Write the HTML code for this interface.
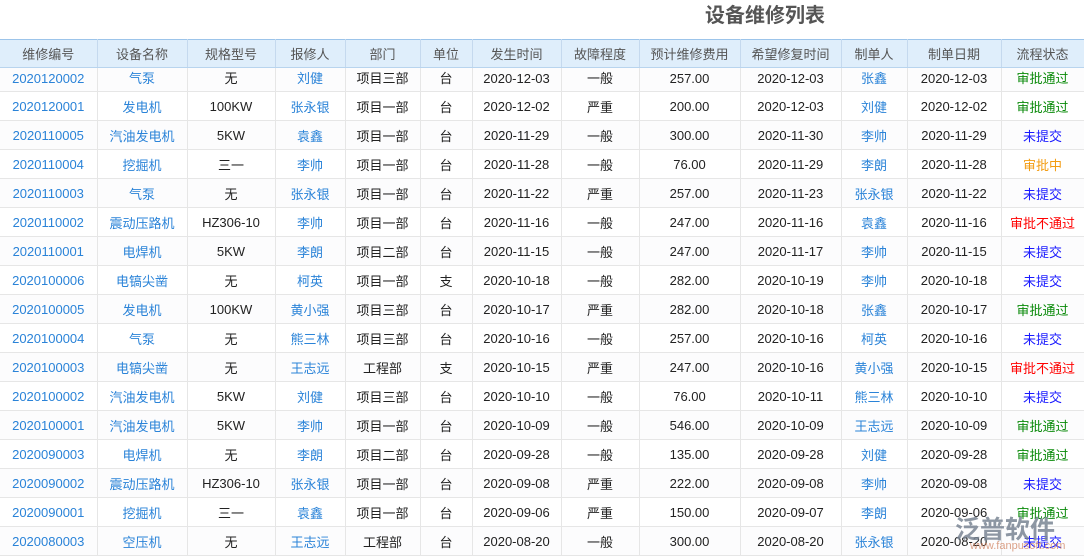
<!DOCTYPE html><html><head><meta charset="utf-8"><style>
body{margin:0;width:1084px;height:557px;overflow:hidden;background:#fff;font-family:"Liberation Sans","Noto Sans CJK SC",sans-serif;font-size:13px;color:#222}
h1{position:absolute;left:0;width:1530px;top:3px;margin:0;text-align:center;font-size:20px;font-weight:bold;color:#555;line-height:26px}
table{position:absolute;top:39px;left:0;border-collapse:collapse;table-layout:fixed;width:1084px}
th{background:#dfeefb;color:#555;font-weight:normal;height:27px;border-top:1px solid #9cc4ea;border-bottom:1px solid #b8d4ee;border-right:1px solid #c5d9ee;padding:0}
td{height:28px;border-bottom:1px solid #e6e6e6;border-right:1px solid #e6e6e6;text-align:center;padding:0;white-space:nowrap}
tr.f td{height:21px;padding-bottom:2px;line-height:18px}
tr:nth-child(even) td{background:#fcfcfd}
.b{color:#2a83d8}.g{color:#0a8a0a}.o{color:#f39c12}.r{color:#f00}.u{color:#1a1aff}
.wm{position:absolute;left:955px;top:510px;color:#7a8594;font-size:25px;opacity:.85;font-weight:bold}
.wm2{position:absolute;left:970px;top:540px;color:#d38a6a;font-size:11px;opacity:.8}
</style></head><body>
<h1>设备维修列表</h1>
<table>
<colgroup><col style="width:97px"><col style="width:90px"><col style="width:88px"><col style="width:70px"><col style="width:75px"><col style="width:52px"><col style="width:89px"><col style="width:78px"><col style="width:101px"><col style="width:101px"><col style="width:66px"><col style="width:94px"><col style="width:83px"></colgroup>
<tr><th>维修编号</th><th>设备名称</th><th>规格型号</th><th>报修人</th><th>部门</th><th>单位</th><th>发生时间</th><th>故障程度</th><th>预计维修费用</th><th>希望修复时间</th><th>制单人</th><th>制单日期</th><th>流程状态</th></tr>
<tr class="f"><td class="b">2020120002</td><td class="b">气泵</td><td>无</td><td class="b">刘健</td><td>项目三部</td><td>台</td><td>2020-12-03</td><td>一般</td><td>257.00</td><td>2020-12-03</td><td class="b">张鑫</td><td>2020-12-03</td><td class="g">审批通过</td></tr>
<tr><td class="b">2020120001</td><td class="b">发电机</td><td>100KW</td><td class="b">张永银</td><td>项目一部</td><td>台</td><td>2020-12-02</td><td>严重</td><td>200.00</td><td>2020-12-03</td><td class="b">刘健</td><td>2020-12-02</td><td class="g">审批通过</td></tr>
<tr><td class="b">2020110005</td><td class="b">汽油发电机</td><td>5KW</td><td class="b">袁鑫</td><td>项目一部</td><td>台</td><td>2020-11-29</td><td>一般</td><td>300.00</td><td>2020-11-30</td><td class="b">李帅</td><td>2020-11-29</td><td class="u">未提交</td></tr>
<tr><td class="b">2020110004</td><td class="b">挖掘机</td><td>三一</td><td class="b">李帅</td><td>项目一部</td><td>台</td><td>2020-11-28</td><td>一般</td><td>76.00</td><td>2020-11-29</td><td class="b">李朗</td><td>2020-11-28</td><td class="o">审批中</td></tr>
<tr><td class="b">2020110003</td><td class="b">气泵</td><td>无</td><td class="b">张永银</td><td>项目一部</td><td>台</td><td>2020-11-22</td><td>严重</td><td>257.00</td><td>2020-11-23</td><td class="b">张永银</td><td>2020-11-22</td><td class="u">未提交</td></tr>
<tr><td class="b">2020110002</td><td class="b">震动压路机</td><td>HZ306-10</td><td class="b">李帅</td><td>项目一部</td><td>台</td><td>2020-11-16</td><td>一般</td><td>247.00</td><td>2020-11-16</td><td class="b">袁鑫</td><td>2020-11-16</td><td class="r">审批不通过</td></tr>
<tr><td class="b">2020110001</td><td class="b">电焊机</td><td>5KW</td><td class="b">李朗</td><td>项目二部</td><td>台</td><td>2020-11-15</td><td>一般</td><td>247.00</td><td>2020-11-17</td><td class="b">李帅</td><td>2020-11-15</td><td class="u">未提交</td></tr>
<tr><td class="b">2020100006</td><td class="b">电镐尖凿</td><td>无</td><td class="b">柯英</td><td>项目一部</td><td>支</td><td>2020-10-18</td><td>一般</td><td>282.00</td><td>2020-10-19</td><td class="b">李帅</td><td>2020-10-18</td><td class="u">未提交</td></tr>
<tr><td class="b">2020100005</td><td class="b">发电机</td><td>100KW</td><td class="b">黄小强</td><td>项目三部</td><td>台</td><td>2020-10-17</td><td>严重</td><td>282.00</td><td>2020-10-18</td><td class="b">张鑫</td><td>2020-10-17</td><td class="g">审批通过</td></tr>
<tr><td class="b">2020100004</td><td class="b">气泵</td><td>无</td><td class="b">熊三林</td><td>项目三部</td><td>台</td><td>2020-10-16</td><td>一般</td><td>257.00</td><td>2020-10-16</td><td class="b">柯英</td><td>2020-10-16</td><td class="u">未提交</td></tr>
<tr><td class="b">2020100003</td><td class="b">电镐尖凿</td><td>无</td><td class="b">王志远</td><td>工程部</td><td>支</td><td>2020-10-15</td><td>严重</td><td>247.00</td><td>2020-10-16</td><td class="b">黄小强</td><td>2020-10-15</td><td class="r">审批不通过</td></tr>
<tr><td class="b">2020100002</td><td class="b">汽油发电机</td><td>5KW</td><td class="b">刘健</td><td>项目三部</td><td>台</td><td>2020-10-10</td><td>一般</td><td>76.00</td><td>2020-10-11</td><td class="b">熊三林</td><td>2020-10-10</td><td class="u">未提交</td></tr>
<tr><td class="b">2020100001</td><td class="b">汽油发电机</td><td>5KW</td><td class="b">李帅</td><td>项目一部</td><td>台</td><td>2020-10-09</td><td>一般</td><td>546.00</td><td>2020-10-09</td><td class="b">王志远</td><td>2020-10-09</td><td class="g">审批通过</td></tr>
<tr><td class="b">2020090003</td><td class="b">电焊机</td><td>无</td><td class="b">李朗</td><td>项目二部</td><td>台</td><td>2020-09-28</td><td>一般</td><td>135.00</td><td>2020-09-28</td><td class="b">刘健</td><td>2020-09-28</td><td class="g">审批通过</td></tr>
<tr><td class="b">2020090002</td><td class="b">震动压路机</td><td>HZ306-10</td><td class="b">张永银</td><td>项目一部</td><td>台</td><td>2020-09-08</td><td>严重</td><td>222.00</td><td>2020-09-08</td><td class="b">李帅</td><td>2020-09-08</td><td class="u">未提交</td></tr>
<tr><td class="b">2020090001</td><td class="b">挖掘机</td><td>三一</td><td class="b">袁鑫</td><td>项目一部</td><td>台</td><td>2020-09-06</td><td>严重</td><td>150.00</td><td>2020-09-07</td><td class="b">李朗</td><td>2020-09-06</td><td class="g">审批通过</td></tr>
<tr><td class="b">2020080003</td><td class="b">空压机</td><td>无</td><td class="b">王志远</td><td>工程部</td><td>台</td><td>2020-08-20</td><td>一般</td><td>300.00</td><td>2020-08-20</td><td class="b">张永银</td><td>2020-08-20</td><td class="u">未提交</td></tr>
</table>
<div class="wm">泛普软件</div><div class="wm2">www.fanpusoft.com</div>
</body></html>
